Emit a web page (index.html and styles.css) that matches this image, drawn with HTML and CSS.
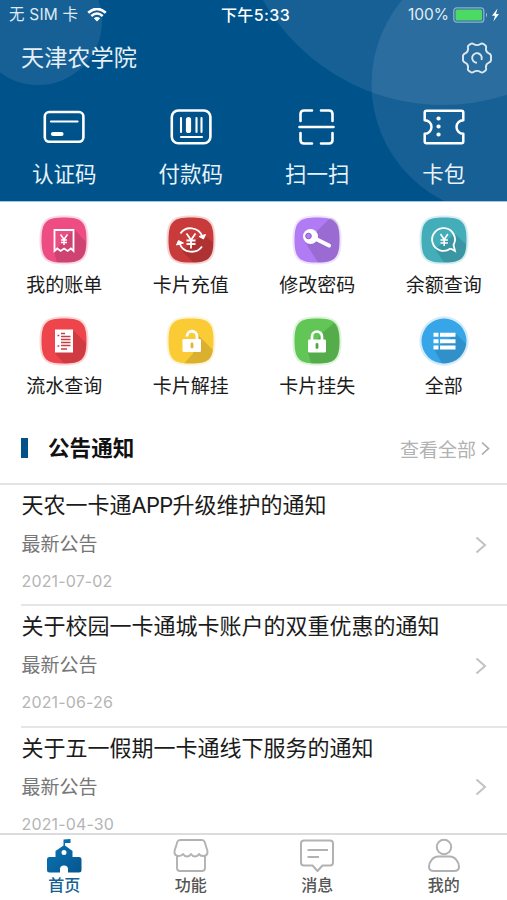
FILE: index.html
```html
<!DOCTYPE html>
<html lang="zh-CN">
<head>
<meta charset="utf-8">
<title>天津农学院</title>
<link rel="stylesheet" href="styles.css">
</head>
<body>
<header class="hero">
  <svg class="hero-bg" viewBox="0 0 507 201" aria-hidden="true">
    <circle cx="38" cy="21" r="64"/><circle cx="443" cy="-102" r="207"/><circle cx="502" cy="84" r="130.5"/>
  </svg>
  <div class="status">
    <div class="carrier"><span>无 SIM 卡</span>
      <svg width="20" height="14" viewBox="0 0 20 14"><path d="M1.2 4.8Q10-3 18.8 4.8" fill="none" stroke="#fff" stroke-width="2.6"/><path d="M4.3 8Q10 3 15.700 8" fill="none" stroke="#fff" stroke-width="2.5"/><path d="M6.800 10.300Q10 7.600 13.200 10.300L10 13.500Z" fill="#fff"/></svg>
    </div>
    <div class="clock">下午5:33</div>
    <div class="power"><span>100%</span>
      <svg width="47" height="16" viewBox="0 0 47 16"><rect x=".8" y=".8" width="30" height="14.400" rx="3" fill="none" stroke="#8eb1cb" stroke-width="1.300"/><rect x="2.500" y="2.500" width="26.600" height="11" rx="1.500" fill="#4cd964"/><path d="M33 5.500q2 2.500 0 5z" fill="#a6c1d5"/><path d="M44.500 1.500 39 8.800h3L40.300 14.500 46 7h-3z" fill="#fff"/></svg>
    </div>
  </div>
  <div class="title"><h1>天津农学院</h1>
    <svg width="32" height="32" viewBox="0 0 32 32" fill="none" stroke="#dce8f0" stroke-width="1.900" stroke-linejoin="round" stroke-linecap="round"><path d="M9.500 2Q11 1 12.500 2Q16 4.300 19.500 2Q21 1 22.500 2L24.500 3.500Q25.500 4.500 25 6Q24.500 10 28 11.500Q29.500 12 30 13.500V18.500Q29.500 20 28 20.500Q24.500 22 25 26Q25.500 27.500 24.500 28.500L22.500 30Q21 31 19.500 30Q16 27.700 12.500 30Q11 31 9.500 30L7.500 28.500Q6.500 27.500 7 26Q7.500 22 4 20.500Q2.500 20 2 18.500V13.500Q2.500 12 4 11.500Q7.500 10 7 6Q6.500 4.500 7.500 3.500Z"/><path d="M15.200 20.700A4.800 4.800 0 1 1 20.600 17.200"/></svg>
  </div>
  <nav class="quick">
    <a><svg width="44" height="38" viewBox="0 0 44 38" fill="none" stroke="#fff" stroke-linecap="round"><rect x="2.800" y="4" width="38.600" height="29.800" rx="4.500" stroke-width="2.600"/><path d="M9 13.500h26.500" stroke-width="2.200"/><path d="M11 26h8.500" stroke-width="4.200"/></svg><span>认证码</span></a>
    <a><svg width="44" height="38" viewBox="0 0 44 38" fill="none" stroke="#fff" stroke-linecap="round"><rect x="2.800" y="2.500" width="38.600" height="32.700" rx="6.500" stroke-width="2.600"/><path d="M12 10v14M27.500 10v14M32.500 10v14M12 29h21" stroke-width="2.100"/><path d="M19.500 11.500v11" stroke-width="5.200"/></svg><span>付款码</span></a>
    <a><svg width="44" height="38" viewBox="0 0 44 38" fill="none" stroke="#fff" stroke-width="2.600" stroke-linecap="round"><path d="M5.500 13V6q0-3.500 3.500-3.500h8M26 2.500h8q3.500 0 3.500 3.500v7M5.500 25v7q0 3.500 3.500 3.500h8M26 35.500h8q3.500 0 3.500-3.500v-7M4.500 19h34"/></svg><span>扫一扫</span></a>
    <a><svg width="44" height="38" viewBox="0 0 44 38" fill="none" stroke="#fff" stroke-width="2.500" stroke-linejoin="round"><path d="M4.500 2.700h35q1.800 0 1.800 1.800v7.700a6.800 6.800 0 0 0 0 13.600v7.700q0 1.800-1.800 1.800h-35q-1.800 0-1.800-1.800v-7.700a6.800 6.800 0 0 0 0-13.600V4.500q0-1.800 1.800-1.800Z"/><path d="M16.500 10.500h.1M16.500 18.500h.1M16.500 26.500h.1" stroke-width="4.200" stroke-linecap="round"/></svg><span>卡包</span></a>
  </nav>
</header>

<section class="services">
  <a><svg class="tile pink" viewBox="0 0 52 52"><path class="halo" d="M26 1.500C45 1.500 50.500 7 50.500 26S45 50.500 26 50.500 1.500 45 1.500 26 7 1.500 26 1.500Z"/><path class="base" d="M26 3.500C43 3.500 48.500 7 48.500 26S43 48.500 26 48.500 3.500 45 3.500 26 9 3.500 26 3.500Z"/><path class="shade" d="M36 15 48 28C48.500 44 43 48.500 26 48.500h-7L16 38Z"/><g fill="none" stroke="#fff" stroke-width="1.800"><path d="M16.500 37V16h19v21l-2.600-2.500-3.200 2.500-3.600-2.500-3.500 2.500-3.300-2.500Z"/><path d="m22.500 20.500 3.500 5 3.500-5M26 25v6M23 26h6M23 28.500h6" stroke-width="1.500"/></g></svg><span>我的账单</span></a>
  <a><svg class="tile red" viewBox="0 0 52 52"><path class="halo" d="M26 1.500C45 1.500 50.500 7 50.500 26S45 50.500 26 50.500 1.500 45 1.500 26 7 1.500 26 1.500Z"/><path class="base" d="M26 3.500C43 3.500 48.500 7 48.500 26S43 48.500 26 48.500 3.500 45 3.500 26 9 3.500 26 3.500Z"/><path class="shade" d="M38 21 48 28C48.500 44 43 48.500 28 48.500L17 37Z"/><g fill="none" stroke="#fff" stroke-width="1.800"><path d="M15.500 19.500C20 12 34 12 37.500 23M37 32.500C32 40 18 40 14.500 29"/><path d="m21.500 19.500 4.500 6.500 4.500-6.500M26 26v8.500M21.500 26.500h9M21.500 30h9"/><path d="m34 22.500 4.500 2.500 2-4.500zM11.500 31l2-4.500 5 2.500z" fill="#fff" stroke-width="1"/></g></svg><span>卡片充值</span></a>
  <a><svg class="tile purple" viewBox="0 0 52 52"><path class="halo" d="M26 1.500C45 1.500 50.500 7 50.500 26S45 50.500 26 50.500 1.500 45 1.500 26 7 1.500 26 1.500Z"/><path class="base" d="M26 3.500C43 3.500 48.500 7 48.500 26S43 48.500 26 48.500 3.500 45 3.500 26 9 3.500 26 3.500Z"/><path class="shade" d="M25 18 39 4C47 5 49 12 48.500 28 48 44 43 48.500 27 48.500L14 28Z"/><circle cx="19.500" cy="22.500" r="7.500" fill="#fff"/><circle cx="17.500" cy="22" r="2.800" fill="#b17df0" stroke="#8d60cc"/><path d="m25 25 13 6.500" stroke="#fff" stroke-width="4" stroke-linecap="round"/></svg><span>修改密码</span></a>
  <a><svg class="tile teal" viewBox="0 0 52 52"><path class="halo" d="M26 1.500C45 1.500 50.500 7 50.500 26S45 50.500 26 50.500 1.500 45 1.500 26 7 1.500 26 1.500Z"/><path class="base" d="M26 3.500C43 3.500 48.500 7 48.500 26S43 48.500 26 48.500 3.500 45 3.500 26 9 3.500 26 3.500Z"/><path class="shade" d="M37 20 48 30C48 44 43 48.500 26 48.500L17 35Z"/><g fill="none" stroke="#fff" stroke-width="1.800"><path d="M32.500 34.500A11.400 11.400 0 1 1 35.500 31l1.500 6-4.500-2.500"/><path d="m22.500 20 3.700 5.500 3.700-5.500M26.200 25.500v6.500M22.500 26h7.400M22.500 29h7.400" stroke-width="1.600"/></g></svg><span>余额查询</span></a>
  <a><svg class="tile coral" viewBox="0 0 52 52"><path class="halo" d="M26 1.500C45 1.500 50.500 7 50.500 26S45 50.500 26 50.500 1.500 45 1.500 26 7 1.500 26 1.500Z"/><path class="base" d="M26 3.500C43 3.500 48.500 7 48.500 26S43 48.500 26 48.500 3.500 45 3.500 26 9 3.500 26 3.500Z"/><path class="shade" d="m35 15 13 13C48 44 43 48.500 26 48.500L17 38Z"/><path d="M17 14.500h18v23H17z" fill="#fff"/><path d="M23 18.500h4M23 21.500h9.500M23 24.500h9.500M23 27.500h9.500M23 30.500h9.500M23 34h6M19.500 20.500h1.800M19.500 31h1.800" stroke="#c83d43" stroke-width="1.500"/></svg><span>流水查询</span></a>
  <a><svg class="tile yellow" viewBox="0 0 52 52"><path class="halo" d="M26 1.500C45 1.500 50.500 7 50.500 26S45 50.500 26 50.500 1.500 45 1.500 26 7 1.500 26 1.500Z"/><path class="base" d="M26 3.500C43 3.500 48.500 7 48.500 26S43 48.500 26 48.500 3.500 45 3.500 26 9 3.500 26 3.500Z"/><path class="shade" d="m32 19 16 16C47 45 42 48.500 26 48.500h-7l9-10Z"/><path d="M22 21.500a5 5 0 0 1 10-.5v5" fill="none" stroke="#fff" stroke-width="2.800"/><rect x="17.500" y="24" width="18.500" height="13" rx="1.200" fill="#fff"/><path d="M27 29v3" stroke="#e4b533" stroke-width="2.800" stroke-linecap="round"/></svg><span>卡片解挂</span></a>
  <a><svg class="tile green" viewBox="0 0 52 52"><path class="halo" d="M26 1.500C45 1.500 50.500 7 50.500 26S45 50.500 26 50.500 1.500 45 1.500 26 7 1.500 26 1.500Z"/><path class="base" d="M26 3.500C43 3.500 48.500 7 48.500 26S43 48.500 26 48.500 3.500 45 3.500 26 9 3.500 26 3.500Z"/><path class="shade" d="M31 18 43 8Q48 13 48.500 26C48.500 45 43 48.500 26 48.500h-6L17 37Z"/><path d="M21 26v-4.500a5 5 0 0 1 10 0V26" fill="none" stroke="#fff" stroke-width="2.700"/><rect x="17" y="24.500" width="18" height="13" rx="1.200" fill="#fff"/><path d="M26 29.500v3" stroke="#4fa744" stroke-width="2.800" stroke-linecap="round"/></svg><span>卡片挂失</span></a>
  <a><svg class="tile blue" viewBox="0 0 52 52"><circle class="halo" cx="26" cy="26" r="24.700"/><circle class="base" cx="26" cy="26" r="22.500"/><path class="shade" d="m38 19 10.500 10A22.500 22.500 0 0 1 24 48.400L16 34Z"/><path d="M15.500 19.800h5M22 19.800h15.500M15.500 26.200h5M22 26.200h15.500M15.500 32.500h5M22 32.500h15.500" stroke="#fff" stroke-width="4"/></svg><span>全部</span></a>
</section>

<section class="notices">
  <div class="section-head"><i></i><h2>公告通知</h2><a>查看全部<svg width="9" height="15" viewBox="0 0 9 15" fill="none" stroke="#aaa" stroke-width="1.700"><path d="m1 1.500 6.500 6L1 13.500"/></svg></a></div>
  <article class="item"><div><h3>天农一卡通<span class="latin">APP</span>升级维护的通知</h3><p>最新公告</p><time>2021-07-02</time></div><svg class="chev" width="12" height="18" viewBox="0 0 12 18"><path d="m1.500 1.500 8.500 7.500-8.500 7.500"/></svg></article>
  <article class="item"><div><h3>关于校园一卡通城卡账户的双重优惠的通知</h3><p>最新公告</p><time>2021-06-26</time></div><svg class="chev" width="12" height="18" viewBox="0 0 12 18"><path d="m1.500 1.500 8.500 7.500-8.500 7.500"/></svg></article>
  <article class="item last"><div><h3>关于五一假期一卡通线下服务的通知</h3><p>最新公告</p><time>2021-04-30</time></div><svg class="chev" width="12" height="18" viewBox="0 0 12 18"><path d="m1.500 1.500 8.500 7.500-8.500 7.500"/></svg></article>
</section>

<nav class="tabs">
  <a class="active"><svg width="36" height="36" viewBox="0 0 36 36"><defs><linearGradient id="school" x1="0" y1="0" x2="1" y2="1"><stop stop-color="#0878b8"/><stop offset="1" stop-color="#07558e"/></linearGradient></defs><path fill="url(#school)" fill-rule="evenodd" d="M17.500 1.500 24.500 1v4H19v2.500l7.500 5.500v6H33q2.500 0 2.500 2.500V32q0 2.500-2.500 2.500H22V31q0-3.500-4-3.500T14 31v3.500H3.500Q1 34.500 1 32V21.500Q1 19 3.500 19h6v-6l8-5.500ZM18 12a2.500 2.500 0 1 0 0 5 2.500 2.500 0 1 0 0-5Z"/></svg><span>首页</span></a>
  <a><svg width="36" height="36" viewBox="0 0 36 36" fill="none" stroke="#b2b2b2" stroke-width="1.900" stroke-linejoin="round"><path d="M7 2h22q2 0 2.700 2l2.800 9q.5 5-4.500 5-3 0-4-2-1.500 2.500-4 2.500T18 16q-1.500 2.500-4 2.500T10 16q-1.500 2-4 2-5 0-4.500-5L4.300 4Q5 2 7 2Z"/><path d="M4 18v12q0 3 3 3h22q3 0 3-3V18"/></svg><span>功能</span></a>
  <a><svg width="36" height="36" viewBox="0 0 36 36" fill="none" stroke="#b2b2b2" stroke-width="2" stroke-linejoin="round"><path d="M5 2.500h26q3 0 3 3v19q0 3-3 3h-7.500L18.500 33l-5-5.500H5q-3 0-3-3v-19q0-3 3-3Z"/><path d="M8.500 12H29M8.500 19H20"/></svg><span>消息</span></a>
  <a><svg width="36" height="36" viewBox="0 0 36 36" fill="none" stroke="#b2b2b2" stroke-width="2"><circle cx="18" cy="9" r="7.200"/><path d="M12 18.500h12c5 0 9 5.500 9 10.500q0 4-5 4H8q-5 0-5-4c0-5 4-10.500 9-10.500Z"/></svg><span>我的</span></a>
</nav>
</body>
</html>
```
FILE: styles.css
```css
* { box-sizing: border-box; }
body {
  margin: 0;
  height: 900px;
  overflow: hidden;
  display: flex;
  flex-direction: column;
  background: #fff;
  color: #1b1b1b;
  font-family: Inter, "Noto Sans CJK SC", sans-serif;
}
h1, h2, h3, p { margin: 0; font-weight: 400; }
svg { display: block; flex: none; }

.hero { position: relative; flex: none; height: 202px; background: #00528b; color: #fff; border-bottom: 1px solid #9fc9e3; }
.hero-bg { position: absolute; inset: 0; width: 507px; height: 201px; fill: #fff; fill-opacity: .085; }
.status { position: relative; height: 30px; display: grid; grid-template-columns: 1fr auto 1fr; align-items: center; padding: 0 7px 0 9px; font-size: 15.5px; line-height: 30px; }
.carrier { display: flex; align-items: center; gap: 9px; color: #dfeaf2; letter-spacing: .2px; }
.clock { font-weight: 500; font-size: 16px; letter-spacing: .4px; padding-left: 2px; }
.power { display: flex; align-items: center; justify-content: flex-end; gap: 4px; color: #e3edf4; }
.title { position: relative; height: 56px; display: flex; justify-content: space-between; align-items: center; padding: 0 14px 0 21px; }
.title h1 { font-size: 23.2px; line-height: 56px; color: #e6eff5; }
.quick { position: relative; display: grid; grid-template-columns: repeat(4, 1fr); padding: 22px 0 0 1px; }
.quick a { display: flex; flex-direction: column; align-items: center; gap: 12px; font-size: 21.5px; line-height: 32px; color: #e9f2f8; }

.services { flex: none; display: grid; grid-template-columns: repeat(4, 1fr); grid-template-rows: 101px 101px; padding: 12px 0 0 1px; height: 214px; }
.services a { display: flex; flex-direction: column; align-items: center; gap: 6px; font-size: 19px; line-height: 28px; }
.tile { width: 52px; height: 52px; }
.halo { opacity: .22; }
.shade { fill: #000; opacity: .13; }
.pink { fill: #ee4d83; }
.red { fill: #c93a3a; }
.purple { fill: #b07bf3; }
.teal { fill: #43adba; }
.coral { fill: #ee444b; }
.yellow { fill: #fbcb35; }
.green { fill: #62c656; }
.blue { fill: #36a6e8; }

.notices { flex: 1; min-height: 0; }
.section-head { height: 69px; display: flex; align-items: center; padding: 0 17px 3px 21px; border-bottom: 2px solid #e4e4e4; }
.section-head i { width: 7px; height: 20px; background: #00528b; }
.section-head h2 { margin-left: 20px; font-size: 21.6px; font-weight: 600; line-height: 32px; color: #111; }
.section-head a { margin-left: auto; display: flex; align-items: center; gap: 5px; font-size: 19px; color: #b2b2b2; }
.item { height: 121.3px; margin-left: 21px; padding-right: 20px; border-bottom: 2px solid #e6e6e6; display: flex; align-items: center; justify-content: space-between; }
.last { border-color: transparent; margin-bottom: -15px; }
.item > div { height: 100%; display: flex; flex-direction: column; padding-left: .5px; }
.item h3 { font-size: 22px; line-height: 32px; padding-top: 4px; white-space: nowrap; }
.latin { letter-spacing: -.8px; }
.item p { margin-top: 10px; font-size: 19px; line-height: 28px; color: #777; }
.item time { margin-top: 13px; font-size: 16px; line-height: 18px; letter-spacing: .15px; color: #b5b5b5; }
.chev { fill: none; stroke: #c2c2c2; stroke-width: 2; }

.tabs { flex: none; height: 67px; display: grid; grid-template-columns: repeat(4, 1fr); border-top: 2px solid #dcdcdc; background: #fff; padding-left: 1px; }
.tabs a { display: flex; flex-direction: column; align-items: center; padding-top: 3px; font-size: 16px; font-weight: 500; line-height: 23px; color: #555; }
.tabs .active { color: #155f93; }
```
